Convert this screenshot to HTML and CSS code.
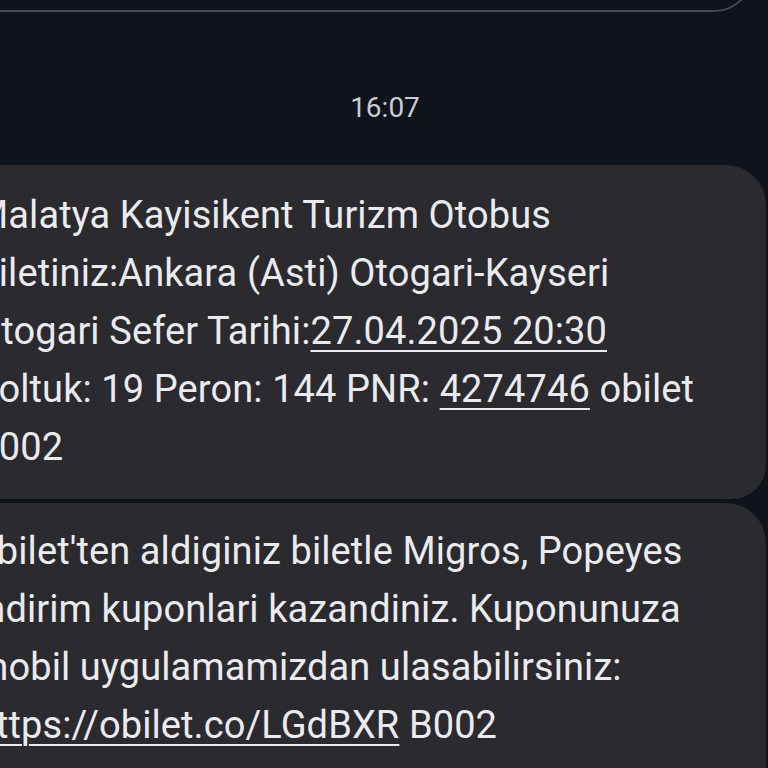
FILE: index.html
```html
<!DOCTYPE html>
<html>
<head>
<meta charset="utf-8">
<link rel="stylesheet" href="styles.css">
</head>
<body>
<div class="screen">
  <div class="prev-bubble"></div>
  <div class="time">16:07</div>
  <div class="bubble first">
    <p class="msg">Malatya Kayisikent Turizm Otobus<br>Biletiniz:Ankara (Asti) Otogari-Kayseri<br>Otogari Sefer Tarihi:<span class="link">27.04.2025 20:30</span><br>Koltuk: 19 Peron: 144 PNR: <span class="link">4274746</span> obilet<br>B002</p>
  </div>
  <div class="bubble second">
    <p class="msg">obilet'ten aldiginiz biletle Migros, Popeyes<br>indirim kuponlari kazandiniz. Kuponunuza<br>mobil uygulamamizdan ulasabilirsiniz:<br><span class="link">https://obilet.co/LGdBXR</span> B002</p>
  </div>
</div>
</body>
</html>
```

FILE: styles.css
```css
html, body {
  margin: 0;
  padding: 0;
  background: #0f131b;
  overflow: hidden;
}
.screen {
  width: 768px;
  height: 768px;
  overflow: hidden;
  display: flex;
  flex-direction: column;
  font-family: Roboto, "Noto Sans", sans-serif;
}
.prev-bubble {
  margin-top: -40px;
  margin-left: -60px;
  width: 810px;
  height: 48px;
  border: 2px solid #45484f;
  border-radius: 0 0 40px 40px;
  flex: none;
}
.time {
  flex: none;
  height: 153px;
  box-sizing: border-box;
  padding-top: 39px;
  display: flex;
  align-items: center;
  justify-content: center;
  padding-left: 2px;
  color: #c9ccd3;
  font-size: 28px;
  line-height: 1;
}
.bubble {
  flex: none;
  margin-left: -60px;
  width: 826px;
  box-sizing: border-box;
  background: #2a2a2f;
  padding: 21px 20px 23px 35px;
}
.bubble.first {
  border-radius: 40px 40px 34px 34px;
}
.bubble.second {
  margin-top: 4px;
  padding-top: 19px;
  border-radius: 40px 40px 0 0;
  height: 300px;
}
.msg {
  margin: 0;
  color: #ebebef;
  font-size: 38px;
  letter-spacing: 0.1px;
  line-height: 58px;
  white-space: nowrap;
}
.link {
  text-decoration: underline;
  text-decoration-thickness: 2px;
  text-underline-offset: 6px;
}
```
